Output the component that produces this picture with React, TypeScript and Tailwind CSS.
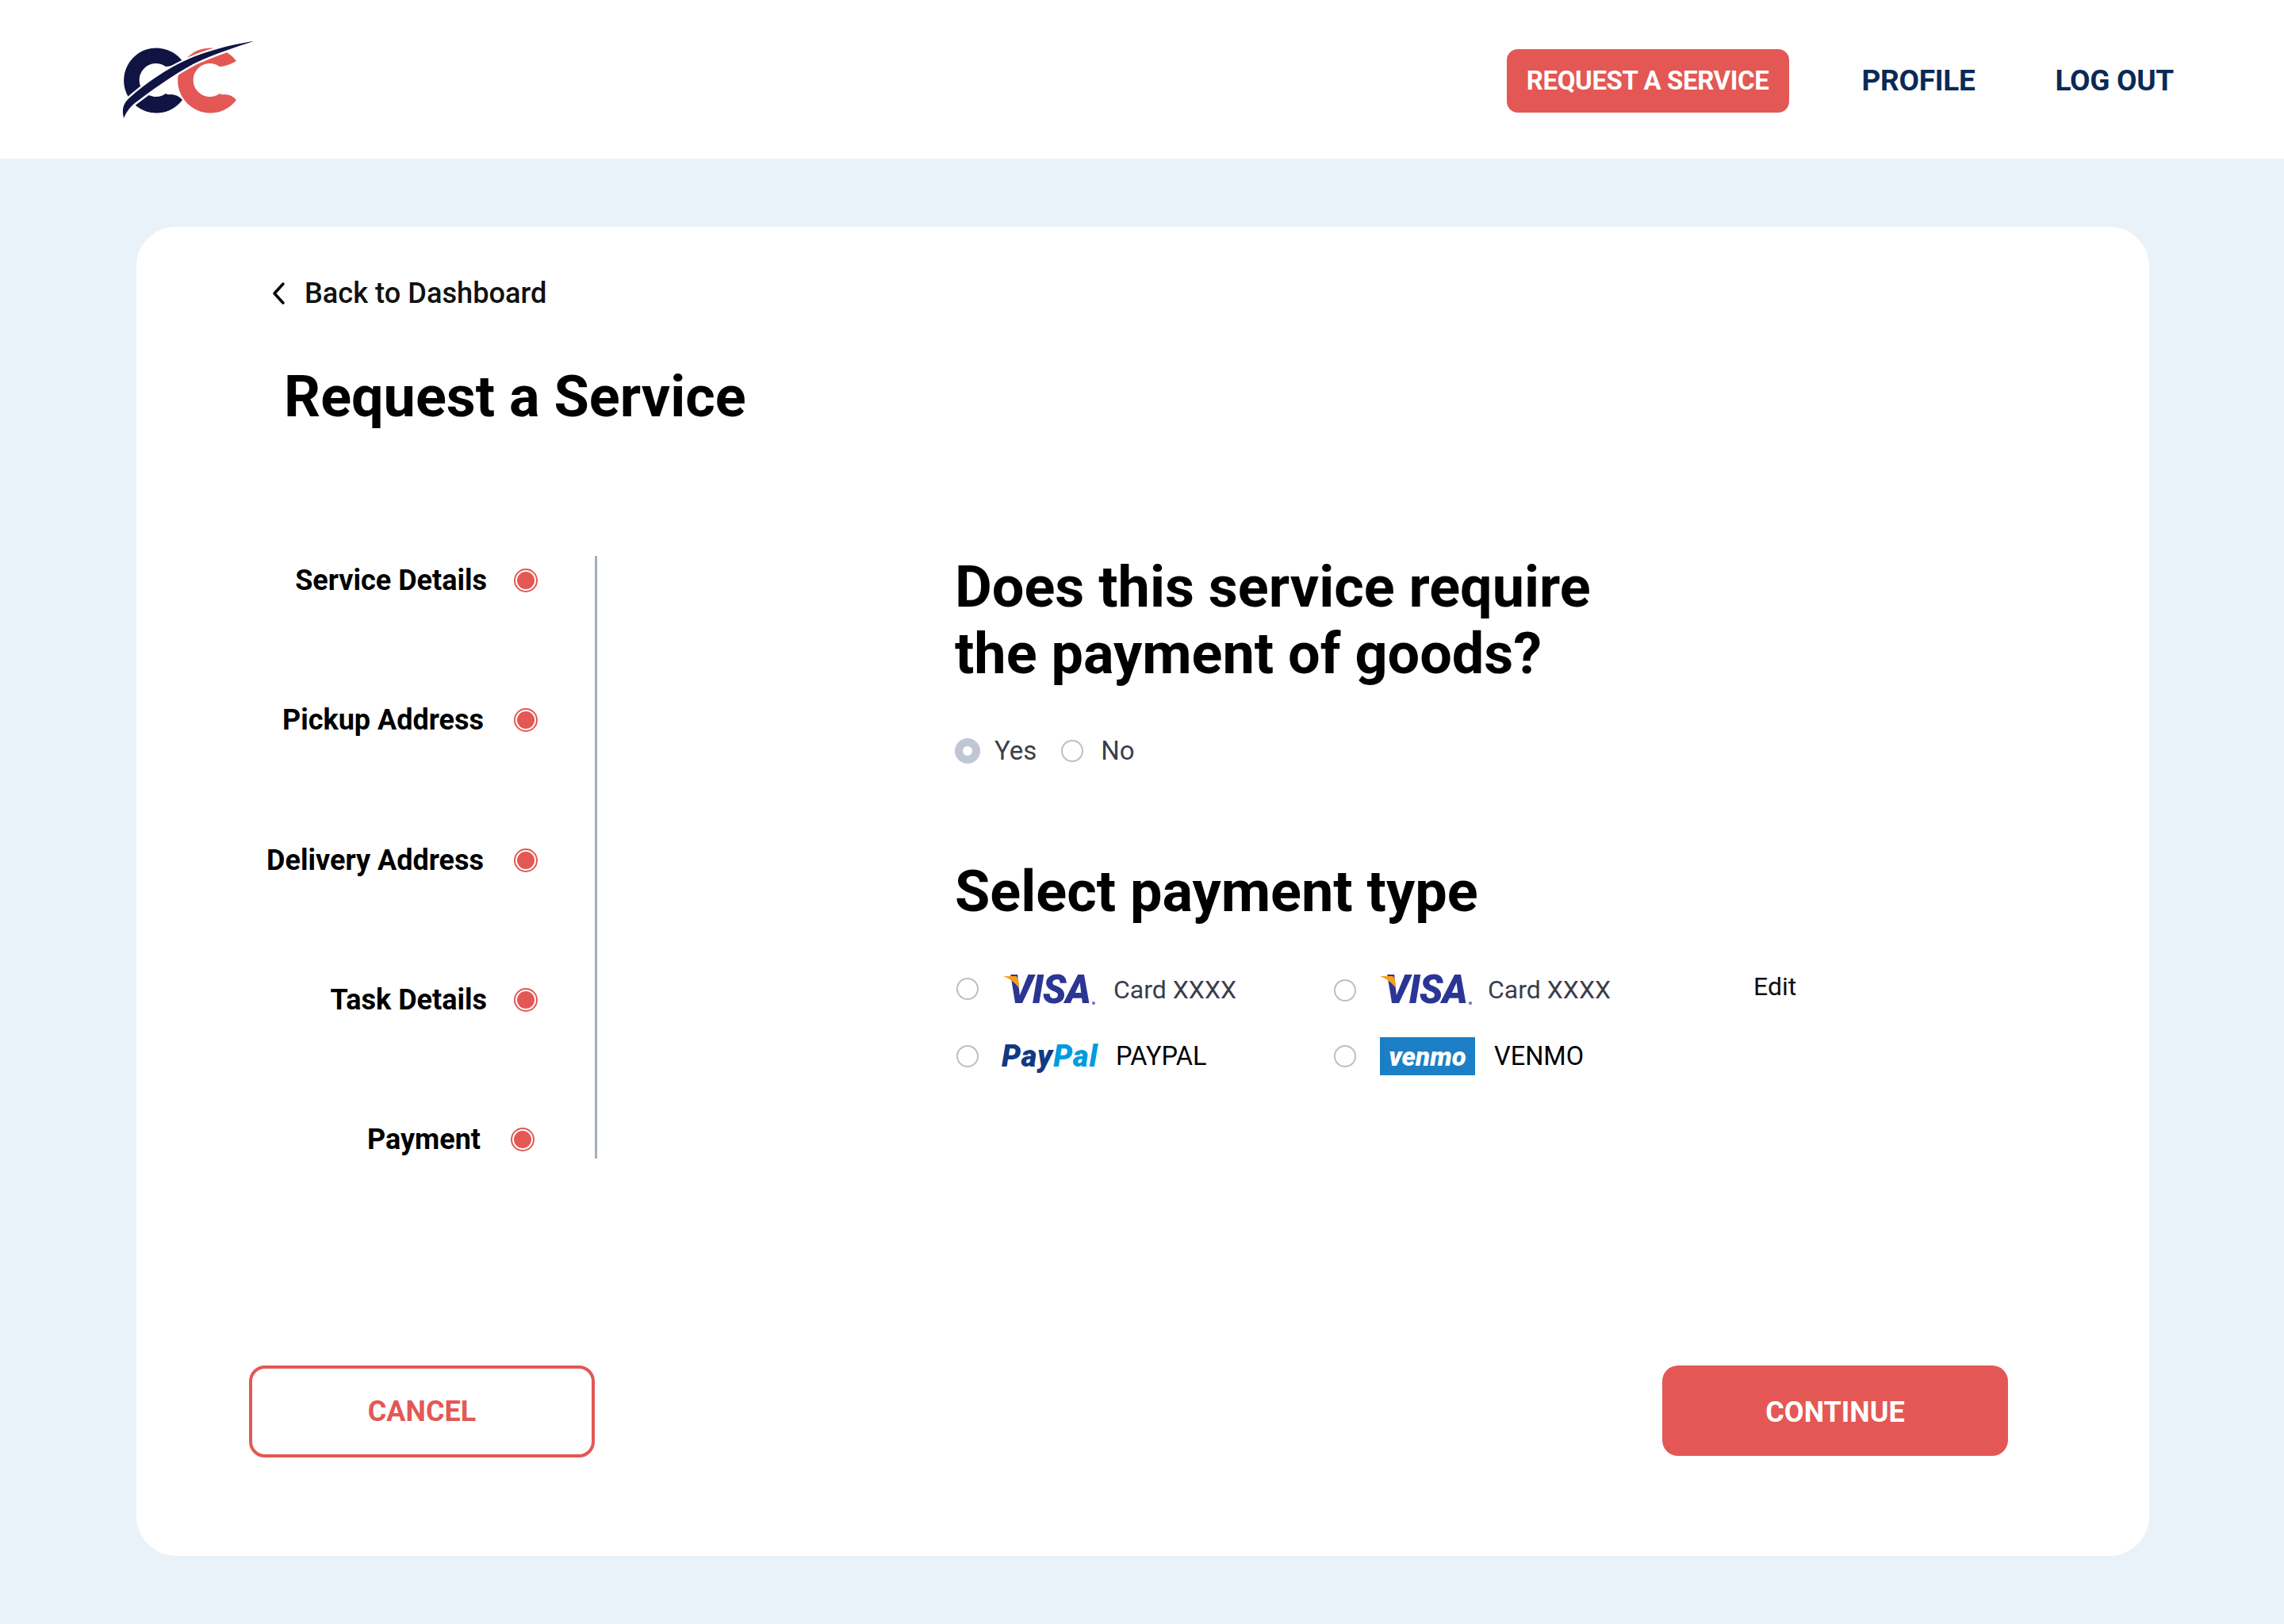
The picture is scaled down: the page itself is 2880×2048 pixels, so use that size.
import React from "react";

const font = { fontFamily: "Roboto, sans-serif" };

function Logo() {
  return (
    <svg width="240" height="150" viewBox="0 0 240 150" className="mb-[10px] block">
      <path d="M110 57 A41 41 0 1 0 110 106 Q104 99 95 99 Q92 100 89 98 A21 21 0 1 1 89 64 Q98 64 110 57 Z" fill="#101443" />
      <path d="M178 57 A41 41 0 1 0 178 106 Q172 99 163 99 Q160 100 157 98 A21 21 0 1 1 157 64 Q166 64 178 57 Z" fill="#e35854" />
      <path d="M36 129 C33 116 36 109 46 101 C80 72 110 56 140 46 C165 38 185 34 200 32 C175 40 150 48 125 60 C95 76 70 95 50 110 C43 116 39 122 36 129 Z" fill="#101443" stroke="#ffffff" strokeWidth="5" paintOrder="stroke" />
    </svg>
  );
}

function Visa() {
  return (
    <div className="relative h-[36px] w-[116px]">
      <svg width="30" height="20" viewBox="0 0 30 20" className="absolute left-0 top-0 z-10">
        <path d="M0 0 H16 C19 1 20 8 20 15 C15 8 8 3 0 0 Z" fill="#f79f1a" />
      </svg>
      <span className="absolute left-[6px] top-[-7px] text-[49px] font-black italic leading-[50px] tracking-[-1px] text-[#2b3694]">VISA</span>
      <span className="absolute bottom-0 right-0 block h-[4px] w-[4px] rounded-full bg-[#6a72b5]" />
    </div>
  );
}

function PayPal() {
  return (
    <span className="block w-[122px] whitespace-nowrap text-[38px] font-black italic leading-[36px] tracking-[1px]">
      <span className="text-[#113984]">Pay</span>
      <span className="text-[#009cde]">Pal</span>
    </span>
  );
}

function Venmo() {
  return (
    <div className="flex h-[48px] w-[120px] items-center justify-center bg-[#1c7fc5]">
      <span className="text-[33px] font-black italic leading-none text-white">venmo</span>
    </div>
  );
}

function Radio() {
  return <span className="block h-[28px] w-[28px] shrink-0 rounded-full border-2 border-[#bfbfbf] bg-white" />;
}

function Step({ label, cls, dotCls }: { label: string; cls: string; dotCls: string }) {
  return (
    <div className={`flex h-[40px] items-center justify-end ${dotCls}`}>
      <span className={`text-[36px] font-bold leading-none text-black ${cls}`}>{label}</span>
      <span className="flex h-[30px] w-[30px] items-center justify-center rounded-full border-2 border-[#e35854] bg-white">
        <span className="block h-[22px] w-[22px] rounded-full bg-[#e35854]" />
      </span>
    </div>
  );
}

export default function App() {
  return (
    <div className="min-h-[2048px] w-[2880px] bg-[#eaf2f9]" style={font}>
      <header className="flex h-[200px] items-center justify-between bg-white pl-[120px] pr-[139px]">
        <Logo />
        <nav className="flex items-center pt-[4px]">
          <a className="flex h-[80px] w-[356px] items-center justify-center rounded-[14px] bg-[#e35854] text-[33px] font-bold tracking-[-0.4px] text-white">REQUEST A SERVICE</a>
          <a className="ml-[92px] text-[37px] font-bold tracking-[-0.3px] text-[#0a2a56]">PROFILE</a>
          <a className="ml-[101px] text-[37px] font-bold tracking-[-0.3px] text-[#0a2a56]">LOG OUT</a>
        </nav>
      </header>

      <main className="px-[172px] pt-[86px] pb-[86px]">
        <section className="h-[1676px] w-[2538px] rounded-[50px] bg-white pl-[142px] pr-[178px] pt-[60px]">
          <div className="flex h-[48px] items-center pl-[28px]">
            <svg width="22" height="30" viewBox="0 0 22 30" fill="none" stroke="#000" strokeWidth="3.5" strokeLinecap="round" strokeLinejoin="round"><path d="M15 3 L4 15 L15 27" /></svg>
            <span className="ml-[20px] text-[36.2px] font-medium leading-none text-[#111]">Back to Dashboard</span>
          </div>
          <h1 className="mt-[65px] pl-[44px] text-[72px] font-bold leading-[84px] text-black">Request a Service</h1>

          <div className="mt-[158px] flex h-[760px]">
            <div className="flex w-[439px] flex-col justify-between border-r-[3px] border-[#a4aec0] pr-[72px] pt-[11px] pb-[4px]">
              <Step label="Service Details" cls="mr-[34px]" dotCls="" />
              <Step label="Pickup Address" cls="mr-[38px]" dotCls="" />
              <Step label="Delivery Address" cls="mr-[38px]" dotCls="" />
              <Step label="Task Details" cls="mr-[34px]" dotCls="" />
              <Step label="Payment" cls="mr-[38px]" dotCls="mr-[4px]" />
            </div>

            <div className="pl-[451px]">
              <h2 className="-mt-[2px] text-[72px] font-bold leading-[84px] text-black">Does this service require<br />the payment of goods?</h2>
              <div className="mt-[60px] flex h-[40px] items-center text-[33px] text-[#3a3f4a]">
                <span className="flex h-[32px] w-[32px] items-center justify-center rounded-full bg-[#bfc7d3]"><span className="block h-[12px] w-[12px] rounded-full bg-white" /></span>
                <span className="ml-[18px]">Yes</span>
                <span className="ml-[31px]"><Radio /></span>
                <span className="ml-[22px]">No</span>
              </div>
              <h2 className="mt-[116px] text-[72px] font-bold leading-[84px] text-black">Select payment type</h2>

              <div className="mt-[57px] w-[1100px] text-[32.5px]">
                <div className="flex h-[50px] items-center">
                  <div className="flex w-[478px] items-center pl-[2px]">
                    <span className="-mt-[4px]"><Radio /></span>
                    <span className="ml-[31px]"><Visa /></span>
                    <span className="ml-[23px] -mt-[2px] text-[32px] text-[#3a3f4a]">Card XXXX</span>
                  </div>
                  <Radio />
                  <span className="ml-[30px]"><Visa /></span>
                  <span className="ml-[20px] -mt-[2px] text-[32px] text-[#3a3f4a]">Card XXXX</span>
                  <span className="ml-[180px] -mt-[10px] text-[32px] text-[#111]">Edit</span>
                </div>
                <div className="mt-[33px] flex h-[50px] items-center">
                  <div className="flex w-[478px] items-center pl-[2px]">
                    <Radio />
                    <span className="ml-[29px]"><PayPal /></span>
                    <span className="ml-[22px] text-black">PAYPAL</span>
                  </div>
                  <Radio />
                  <span className="ml-[30px]"><Venmo /></span>
                  <span className="ml-[24px] text-black">VENMO</span>
                </div>
              </div>
            </div>
          </div>

          <div className="mt-[261px] flex items-start justify-between">
            <button className="flex h-[116px] w-[436px] items-center justify-center rounded-[20px] border-[4px] border-[#e35854] bg-white text-[36px] font-bold text-[#e35854]">CANCEL</button>
            <button className="flex h-[114px] w-[436px] items-center justify-center rounded-[20px] bg-[#e35854] pt-[3px] text-[36px] font-bold text-white">CONTINUE</button>
          </div>
        </section>
      </main>
    </div>
  );
}
